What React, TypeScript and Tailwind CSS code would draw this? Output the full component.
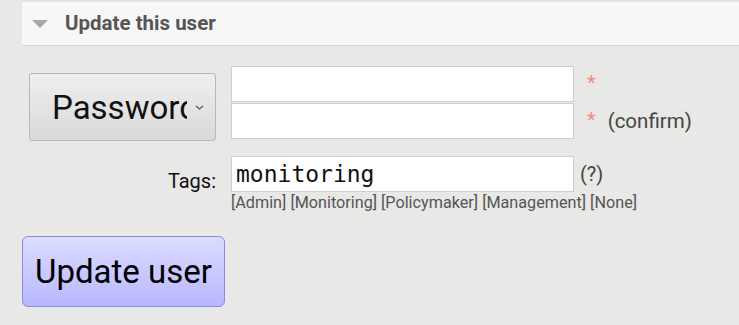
import React from 'react';

const font = { fontFamily: 'Roboto, "Liberation Sans", sans-serif' };

export default function App() {
  const tags = ['Admin', 'Monitoring', 'Policymaker', 'Management', 'None'];

  return (
    <div className="w-[739px] h-[325px] bg-[#e8e8e6] overflow-hidden" style={font}>
      {/* Section header */}
      <div className="ml-[22px] h-[46px] bg-[#f7f7f7] border-t-2 border-b border-t-[#e2e2e2] border-b-[#d8d8d8] flex items-center">
        <svg width="16" height="10" viewBox="0 0 16 10" className="ml-[10px] mr-[17px]">
          <polygon points="0,1 16,1 8,9" fill="#a8a8a8" />
        </svg>
        <span className="text-[20.5px] font-bold text-[#555]">Update this user</span>
      </div>

      {/* Password row */}
      <div className="flex mt-[20px]">
        <div className="w-[231px] pl-[29px] pt-[7px]">
          <div className="w-[187px] h-[68px] rounded-[3px] border border-[#b8b8b8] bg-gradient-to-b from-[#efefef] to-[#d9d9d9] flex items-center pl-[22px] pr-[11px] overflow-hidden">
            <span className="text-[33px] leading-none text-[#111] whitespace-nowrap overflow-hidden w-[135px]">Password</span>
            <svg width="9" height="5" viewBox="0 0 9 5" className="ml-auto">
              <polyline points="1,1 4.5,4 8,1" fill="none" stroke="#555" strokeWidth="1.2" />
            </svg>
          </div>
        </div>
        <div className="flex flex-col gap-[1px]">
          <div className="flex items-center">
            <input className="w-[343px] h-[36px] bg-white border border-[#cfcfcf] outline-none" />
            <span className="ml-[13px] text-[20px] text-[#f58a8a] -mt-[2px]">*</span>
          </div>
          <div className="flex items-center">
            <input className="w-[343px] h-[36px] bg-white border border-[#cfcfcf] outline-none" />
            <span className="ml-[13px] text-[20px] text-[#f58a8a] -mt-[2px]">*</span>
            <span className="ml-[12px] text-[20.5px] text-[#444]">(confirm)</span>
          </div>
        </div>
      </div>

      {/* Tags row */}
      <div className="flex mt-[15px]">
        <div className="w-[231px] flex justify-end pr-[15px] pt-[10px]">
          <span className="text-[20px] text-[#111]">Tags:</span>
        </div>
        <div>
          <div className="flex items-center">
            <input
              defaultValue="monitoring"
              className="w-[343px] h-[36px] bg-white border border-[#cfcfcf] outline-none px-[4px] text-[23px] text-[#111]"
              style={{ fontFamily: '"DejaVu Sans Mono", "Liberation Mono", monospace' }}
            />
            <span className="ml-[6px] text-[20px] text-[#444]">(?)</span>
          </div>
          <div className="text-[16.2px] leading-[22px] text-[#555] whitespace-nowrap">
            {tags.map((t, i) => (
              <span key={t}>
                {i > 0 && ' '}[{t}]
              </span>
            ))}
          </div>
        </div>
      </div>

      {/* Submit */}
      <div className="ml-[22px] mt-[22px]">
        <button className="w-[203px] h-[71px] rounded-[6px] border border-[#8a8ae6] bg-gradient-to-b from-[#dcdcff] to-[#b8b8ff] text-[33px] text-black">
          Update user
        </button>
      </div>
    </div>
  );
}
